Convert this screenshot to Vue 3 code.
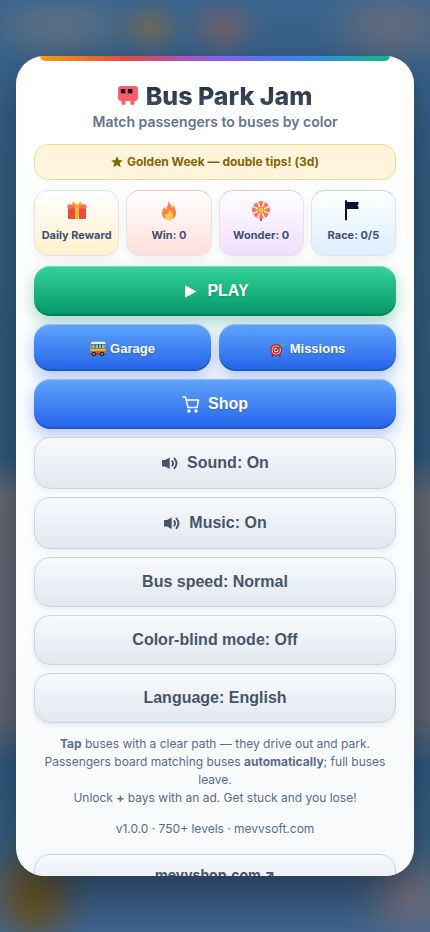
<script setup>
import { ref, computed } from 'vue'

const sound = ref(true)
const music = ref(true)
const colorBlind = ref(false)
const fast = ref(false)
const onOff = (v) => (v ? 'On' : 'Off')

const toggles = computed(() => [
  { key: 'sound', label: `Sound: ${onOff(sound.value)}`, icon: true, run: () => (sound.value = !sound.value) },
  { key: 'music', label: `Music: ${onOff(music.value)}`, icon: true, run: () => (music.value = !music.value) },
  { key: 'speed', label: `Bus speed: ${fast.value ? 'Fast' : 'Normal'}`, run: () => (fast.value = !fast.value) },
  { key: 'blind', label: `Color-blind mode: ${onOff(colorBlind.value)}`, run: () => (colorBlind.value = !colorBlind.value) },
  { key: 'lang', label: 'Language: English', run: () => {} }
])

const rays = Array.from({ length: 8 }, (_, i) => i * 45)
</script>

<template>
  <div class="screen">
    <main class="card">
      <div class="rainbow"></div>
      <header class="head">
        <h1 class="title">
          <svg class="logo" viewBox="0 0 20 20" aria-hidden="true">
            <rect x="0" y="0" width="20" height="15" rx="3" fill="#ff5c6c" />
            <rect x="2.8" y="3" width="4.6" height="4.4" fill="#0f172a" />
            <rect x="9.8" y="3" width="4.6" height="4.4" fill="#0f172a" />
            <circle cx="5.5" cy="16.8" r="2.2" fill="#ff5c6c" />
            <circle cx="14.4" cy="16.8" r="2.2" fill="#ff5c6c" />
          </svg>
          <span class="title-text">Bus Park Jam</span>
        </h1>
        <p class="subtitle">Match passengers to buses by color</p>
      </header>

      <div class="banner">
        <svg class="star" viewBox="0 0 12 12" aria-hidden="true">
          <path d="M6 0.3 7.7 4 11.8 4.4 8.7 7.1 9.7 11.3 6 9.1 2.3 11.3 3.3 7.1 0.2 4.4 4.3 4Z" fill="#856404" />
        </svg>
        <span>Golden Week — double tips! (3d)</span>
      </div>

      <div class="tiles">
        <button class="tile gold" type="button">
          <svg class="tile-icon" viewBox="0 0 22 22" aria-hidden="true">
            <path d="M10.5 4.5C9 1 5.5 1.5 6 3.5S9 5 10.5 4.5ZM11.5 4.5C13 1 16.5 1.5 16 3.5S13 5 11.5 4.5Z" fill="#fbbf24" />
            <rect x="2" y="8" width="18" height="11" rx="1" fill="#e74c3c" />
            <rect x="1.5" y="4.5" width="19" height="4" rx="1" fill="#ff6b5a" />
            <rect x="9" y="4" width="4" height="15" fill="#fbc531" />
            <path d="M11 5v14" stroke="#e0a52a" stroke-width="1" />
          </svg>
          <span>Daily Reward</span>
        </button>
        <button class="tile red" type="button">
          <svg class="tile-icon" viewBox="0 0 22 22" aria-hidden="true">
            <path d="M10.5 1C12 4 13 5 14 8c1-.5 1.500-1.500 1.500-3C17 8 18 10 18 13c0 4-2.500 6.500-7 6.500S4 17 4 13c0-3 1.500-4.500 2.500-6 .5 1 .5 2 1.500 2.500C9 7 10.500 5 10.500 1Z" fill="#ff7f3f" />
            <path d="M11.5 9.500c.5 2 3.500 3 3.500 6.300 0 2.500-1.500 3.700-4 3.700s-4-1.200-4-3.700c0-1.500.5-2.500 1.500-3.300.2 1 .5 1.500 1.200 1.500.8-1 1-3 1.800-4.500Z" fill="#ffcf45" />
          </svg>
          <span>Win: 0</span>
        </button>
        <button class="tile violet" type="button">
          <svg class="tile-icon" viewBox="0 0 22 22" aria-hidden="true">
            <path d="M11 18v3" stroke="#64748b" stroke-width="2" />
            <circle cx="11" cy="10" r="9" fill="#ff6f61" />
            <g stroke="#fff1e6" stroke-width="1.6">
              <path v-for="r in rays" :key="r" d="M11 10V1" :transform="`rotate(${r + 22} 11 10)`" />
            </g>
            <circle cx="11" cy="10" r="3" fill="#fbc531" stroke="#e5962d" stroke-width="1" />
          </svg>
          <span>Wonder: 0</span>
        </button>
        <button class="tile sky" type="button">
          <svg class="tile-icon" viewBox="0 0 22 22" aria-hidden="true">
            <path d="M4 1v18.5" stroke="#0b1230" stroke-width="2" stroke-linecap="round" />
            <path d="M4 2H16.5V4L15.5 5.500 16.5 7V9H4Z" fill="#0b1230" />
          </svg>
          <span>Race: 0/5</span>
        </button>
      </div>

      <div class="actions">
        <button class="btn green" type="button">
          <svg class="icon" viewBox="0 0 18 18" aria-hidden="true"><path d="M4 3.2 15.5 9.5 4 15.8Z" fill="#fff" /></svg>
          <span>PLAY</span>
        </button>
        <div class="pair">
          <button class="btn blue small" type="button">
            <svg class="emoji" viewBox="0 0 16 16" aria-hidden="true">
              <rect x="0.5" y="1.5" width="15" height="12" rx="1.5" fill="#f5b21e" />
              <path d="M2.5 0.800H14Q15.5 0.800 15.5 3H1Q1 0.800 2.5 0.800Z" fill="#f6ecc8" />
              <rect x="1.2" y="3" width="14" height="4.600" fill="#3d5560" />
              <path d="M1.8 3.500H4.600V7.200H1.600ZM5.600 3.500H8V7.200H5.600ZM9 3.500H11V7.200H9ZM12 3.500H14.700V7.200H12Z" fill="#7cc4d4" />
              <rect x="0.5" y="10" width="15" height="2.600" fill="#e8581c" />
              <rect x="0.5" y="12.3" width="15" height="1.400" fill="#47403f" />
              <circle cx="4" cy="13" r="2.2" fill="#24272d" />
              <circle cx="12" cy="13" r="2.2" fill="#24272d" />
              <circle cx="4" cy="13" r="0.9" fill="#a9adb3" />
              <circle cx="12" cy="13" r="0.9" fill="#a9adb3" />
            </svg>
            <span>Garage</span>
          </button>
          <button class="btn blue small" type="button">
            <svg class="emoji" viewBox="0 0 16 16" aria-hidden="true">
              <path d="M3 13.5 2 15.5M9.5 13.5 10.5 15.5" stroke="#7d1d1d" stroke-width="1.2" />
              <circle cx="6.2" cy="9" r="6" fill="#c81e26" />
              <circle cx="6.2" cy="9" r="4.6" fill="#f4e8e6" />
              <circle cx="6.2" cy="9" r="3.7" fill="#d4252c" />
              <circle cx="6.2" cy="9" r="2.2" fill="#f4e8e6" />
              <circle cx="6.2" cy="9" r="1.2" fill="#c81e26" />
              <path d="M6.2 9 12 4.2" stroke="#4b5563" stroke-width="1.2" />
              <path d="M10.5 5.5V3L13 0.800 13.3 2.700 15.8 3.200 13.5 5.500Z" fill="#35b8a6" />
            </svg>
            <span>Missions</span>
          </button>
        </div>
        <button class="btn blue" type="button">
          <svg class="icon" viewBox="0 0 18 18" fill="none" stroke="#fff" stroke-width="1.5" stroke-linecap="round" stroke-linejoin="round" aria-hidden="true">
            <path d="M1 2H3.500L6 12.500H15L16.500 5H4.300" />
            <circle cx="7" cy="16" r="1" fill="#fff" />
            <circle cx="14" cy="16" r="1" fill="#fff" />
          </svg>
          <span>Shop</span>
        </button>
        <button
          v-for="t in toggles"
          :key="t.key"
          class="btn ghost"
          :class="{ tall: t.icon }"
          type="button"
          @click="t.run"
        >
          <svg v-if="t.icon" class="icon" viewBox="0 0 18 18" aria-hidden="true">
            <path d="M1 6H4L8.700 3.500V15L4 12.500H1Z" fill="#475569" />
            <path d="M11.300 7Q12.800 9.300 11.300 11.600M13.500 4.500Q17.500 9.300 13.500 14.200" fill="none" stroke="#475569" stroke-width="1.9" stroke-linecap="round" />
          </svg>
          <span>{{ t.label }}</span>
        </button>
      </div>

      <p class="help">
        <b>Tap</b> buses with a clear path — they drive out and park.<br />
        Passengers board matching buses <b>automatically</b>; full buses leave.<br />
        Unlock <b>+</b> bays with an ad. Get stuck and you lose!
      </p>
      <p class="version">v1.0.0 · 750+ levels · mevvsoft.com</p>
      <a class="btn ghost link" href="#">mevvshop.com ↗</a>
    </main>
  </div>
</template>

<style>
body {
  margin: 0;
}
</style>

<style scoped>
.screen {
  box-sizing: border-box;
  height: 100vh;
  padding: 0 16px;
  display: flex;
  align-items: center;
  overflow: hidden;
  font-family: Inter, "Liberation Sans", sans-serif;
  background:
    radial-gradient(ellipse 44px 36px at 35% 3%, #6b6a5a 0%, #6b6a5a99 35%, #6b6a5a26 70%, #6b6a5a00 100%),
    radial-gradient(ellipse 48px 38px at 52% 3%, #6f606c 0%, #6f606c99 35%, #6f606c26 70%, #6f606c00 100%),
    radial-gradient(ellipse 90px 44px at 14% 3%, #5d7084 0%, #5d7084aa 40%, #5d708433 72%, #5d708400 100%),
    radial-gradient(ellipse 80px 52px at 91% 3%, #646c7e 0%, #646c7eaa 40%, #646c7e33 72%, #646c7e00 100%),
    radial-gradient(ellipse 62px 70px at 8% 96%, #6b5420 0%, #6b5420bb 35%, #6b542033 70%, #6b542000 100%),
    radial-gradient(ellipse 68px 64px at 95% 96%, #75707c 0%, #75707c99 35%, #75707c2b 70%, #75707c00 100%),
    linear-gradient(180deg, #3a648e 0%, #386288 12%, #33607f 30%, #305d80 49%, #6a6e77 53%, #666b75 77%, #315c80 82%, #3a6284 92%, #426590 100%);
}

.card {
  box-sizing: border-box;
  position: relative;
  width: 100%;
  max-width: 420px;
  height: 88vh;
  margin: 0 auto;
  padding: 24px 18px;
  overflow: hidden;
  border-radius: 28px;
  background: linear-gradient(180deg, #ffffff, #f8fafc);
  box-shadow: 0 20px 50px rgba(15, 23, 42, 0.55);
  text-align: center;
}

.rainbow {
  position: absolute;
  top: 0;
  left: 24px;
  right: 24px;
  height: 5px;
  border-radius: 0 0 6px 6px;
  background: linear-gradient(90deg, #f59e0b, #ef4444, #8b5cf6, #3b82f6, #10b981);
}

.title {
  display: flex;
  align-items: center;
  justify-content: center;
  gap: 8px;
  margin: 0;
  font-size: 25px;
  line-height: 32px;
  font-weight: 800;
}

.logo {
  width: 20px;
  height: 20px;
}

.title-text {
  color: transparent;
  background: linear-gradient(180deg, #1e293b, #475569);
  background-clip: text;
}

.subtitle {
  margin: 2px 0 0;
  font-size: 14px;
  line-height: 16px;
  font-weight: 600;
  color: #64748b;
}

.banner {
  display: flex;
  align-items: center;
  justify-content: center;
  gap: 4px;
  margin-top: 14px;
  padding: 10px;
  border: 1px solid #f0d999;
  border-radius: 14px;
  background: #fff5dc;
  color: #856404;
  font-size: 12px;
  line-height: 14px;
  font-weight: 700;
}

.star {
  width: 12px;
  height: 12px;
}

.tiles {
  display: grid;
  grid-template-columns: repeat(4, minmax(0, 1fr));
  gap: 7px;
  margin-top: 10px;
}

.tile {
  display: flex;
  flex-direction: column;
  align-items: center;
  gap: 7px;
  padding: 9px 0 14px;
  border: 1px solid #dfe3ea;
  border-radius: 14px;
  box-shadow: 0 3px 8px rgba(15, 23, 42, 0.06);
  color: #3f4f73;
  font-family: inherit;
  font-size: 11px;
  line-height: 12px;
  font-weight: 700;
  white-space: nowrap;
}

.tile-icon {
  width: 22px;
  height: 22px;
}

.gold { background: linear-gradient(180deg, #ffffff, #fef0cc); }
.red { background: linear-gradient(180deg, #ffffff, #fedfd9); border-top-color: #ecc9c9; }
.violet { background: linear-gradient(180deg, #ffffff, #efdffe); border-top-color: #d9ccf0; }
.sky { background: linear-gradient(180deg, #ffffff, #dceefe); border-top-color: #c3d8ee; }

.actions {
  display: flex;
  flex-direction: column;
  gap: 8px;
  margin-top: 10px;
}

.pair {
  display: grid;
  grid-template-columns: 1fr 1fr;
  gap: 8px;
}

.btn {
  box-sizing: border-box;
  display: flex;
  align-items: center;
  justify-content: center;
  gap: 8px;
  width: 100%;
  padding: 16px;
  border: 0;
  border-radius: 16px;
  color: #fff;
  font-family: "Liberation Sans", Arial, sans-serif;
  font-size: 16px;
  line-height: 18px;
  font-weight: 700;
  text-shadow: 0 1px 2px rgba(0, 0, 0, 0.2);
  text-decoration: none;
}

.icon {
  width: 18px;
  height: 18px;
}

.emoji {
  width: 16px;
  height: 16px;
}

.green {
  background: linear-gradient(180deg, #34d399, #059669);
  box-shadow: 0 6px 16px rgba(5, 150, 105, 0.35), inset 0 1px 0 rgba(255, 255, 255, 0.3), inset 0 -2px 0 rgba(0, 0, 0, 0.15);
}

.blue {
  background: linear-gradient(180deg, #60a5fa, #2563eb);
  box-shadow: 0 6px 16px rgba(37, 99, 235, 0.35), inset 0 1px 0 rgba(255, 255, 255, 0.3), inset 0 -2px 0 rgba(0, 0, 0, 0.15);
}

.small {
  gap: 4px;
  padding: 17px 16px 14px;
  font-size: 13px;
  line-height: 16px;
}

.ghost {
  padding: 15px;
  border: 1px solid #cbd5e1;
  background: linear-gradient(180deg, #f8fafc, #e2e8f0);
  box-shadow: 0 2px 6px rgba(15, 23, 42, 0.08);
  color: #475569;
  text-shadow: none;
}

.tall {
  padding: 16px;
}

.help,
.version {
  margin: 12px 0 0;
  font-size: 12px;
  line-height: 18px;
  color: #5a6b8f;
}

.version {
  margin-top: 13px;
}

.link {
  margin-top: 16px;
  padding: 11px;
  font-family: inherit;
  font-size: 14px;
}
</style>
